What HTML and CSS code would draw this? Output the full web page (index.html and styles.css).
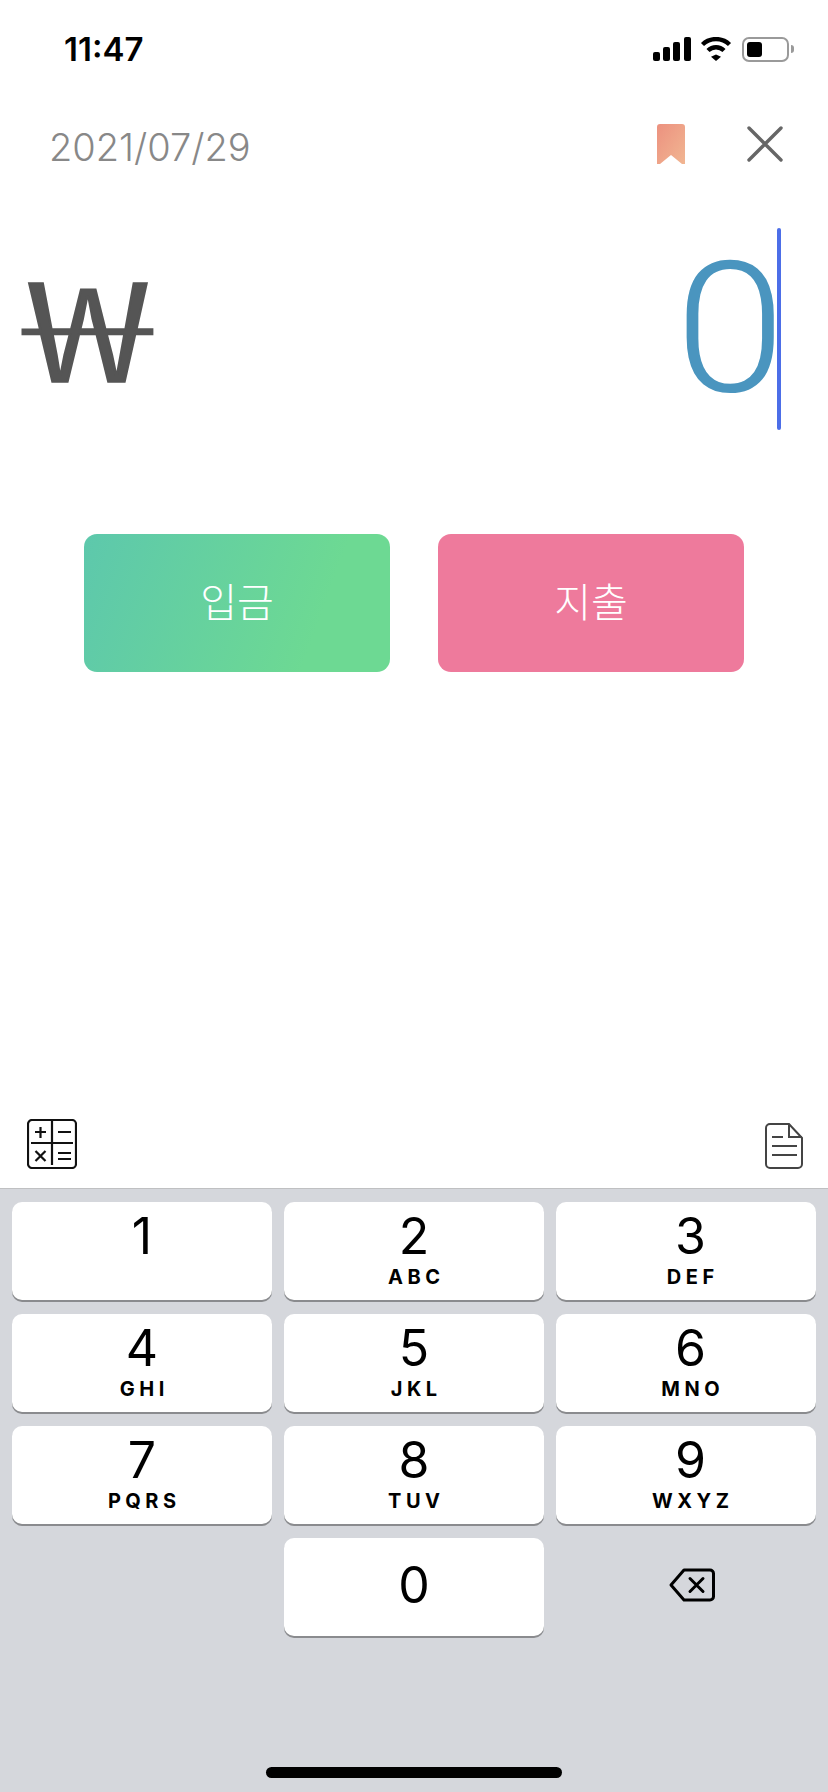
FILE: index.html
```html
<!DOCTYPE html>
<html lang="ko">

<head>
    <meta charset="UTF-8">
    <meta name="viewport" content="width=device-width, initial-scale=1.0">
    <title>입금 / 지출</title>
    <link rel="stylesheet" href="styles.css">
</head>

<body>
    <div class="screen">
        <div class="status">
            <span class="time">11:47</span>
            <div class="status-icons">
                <svg width="38" height="24" viewBox="0 0 38 24">
                    <rect x="0" y="15" width="7" height="9" rx="2"></rect>
                    <rect x="10" y="10" width="7" height="14" rx="2"></rect>
                    <rect x="20" y="5" width="7" height="19" rx="2"></rect>
                    <rect x="31" y="0" width="7" height="24" rx="2"></rect>
                </svg>
                <svg class="wifi" width="32" height="24" viewBox="0 0 32 24">
                    <path d="M16 17.500l5 2.200-5 4.300-5-4.300z"></path>
                    <path d="M8 13.500a11.500 11.500 0 0 1 16 0" class="arc"></path>
                    <path d="M2.500 7.500a19.500 19.500 0 0 1 27 0" class="arc"></path>
                </svg>
                <div class="battery">
                    <div class="battery-body"><span class="battery-fill"></span></div>
                    <span class="battery-nub"></span>
                </div>
            </div>
        </div>

        <div class="top">
            <span class="date">2021/07/29</span>
            <div class="top-icons">
                <svg width="28" height="40" viewBox="0 0 28 40">
                    <defs>
                        <linearGradient id="mark" x1="0" y1="0" x2="1" y2="1">
                            <stop offset="0" stop-color="#ec917f"></stop>
                            <stop offset="1" stop-color="#f1b692"></stop>
                        </linearGradient>
                    </defs>
                    <path d="M3 0h22a3 3 0 0 1 3 3v37l-3 0-11-9-11 9-3 0V3a3 3 0 0 1 3-3z" fill="url(#mark)"></path>
                </svg>
                <svg width="36" height="36" viewBox="0 0 36 36">
                    <path d="M2 2l32 32M34 2L2 34" stroke="#666" stroke-width="3.400" stroke-linecap="round" fill="none"></path>
                </svg>
            </div>
        </div>

        <div class="amount">
            <span class="won">₩</span>
            <div class="value">
                <span class="zero">0</span>
                <span class="caret"></span>
            </div>
        </div>

        <div class="actions">
            <button class="btn btn-in">입금</button>
            <button class="btn btn-out">지출</button>
        </div>

        <div class="tools">
            <svg width="50" height="50" viewBox="0 0 50 50" fill="none" stroke="#111" stroke-width="2.200">
                <rect x="1" y="1" width="48" height="48" rx="4"></rect>
                <path d="M25 0v46M4 24h42"></path>
                <path d="M8 13h11M13.500 8v11M31 13h13M8.500 32l10 10M18.500 32l-10 10M31 34h13M31 40h13"></path>
            </svg>
            <svg width="38" height="46" viewBox="0 0 38 46" fill="none" stroke="#444" stroke-width="2">
                <path d="M23 1H5a4 4 0 0 0-4 4v36a4 4 0 0 0 4 4h28a4 4 0 0 0 4-4V15L24 1v13h13"></path>
                <path d="M7 14h11M7 23h25M7 32h25"></path>
            </svg>
        </div>

        <div class="keyboard">
            <div class="keys">
                <button class="key"><span class="digit">1</span></button>
                <button class="key"><span class="digit">2</span><span class="letters">ABC</span></button>
                <button class="key key-right"><span class="digit">3</span><span class="letters">DEF</span></button>
                <button class="key"><span class="digit">4</span><span class="letters">GHI</span></button>
                <button class="key"><span class="digit">5</span><span class="letters">JKL</span></button>
                <button class="key key-right"><span class="digit">6</span><span class="letters">MNO</span></button>
                <button class="key"><span class="digit">7</span><span class="letters">PQRS</span></button>
                <button class="key"><span class="digit">8</span><span class="letters">TUV</span></button>
                <button class="key key-right"><span class="digit">9</span><span class="letters">WXYZ</span></button>
                <div></div>
                <button class="key key-zero"><span class="digit">0</span></button>
                <div class="backspace">
                    <svg width="46" height="34" viewBox="0 0 46 34" fill="none" stroke="#000" stroke-width="3" stroke-linejoin="round" stroke-linecap="round">
                        <path d="M15 2h26a3.500 3.500 0 0 1 3.500 3.500v23a3.500 3.500 0 0 1-3.500 3.500H15L2 17z"></path>
                        <path d="M21 10.500l13 13M34 10.500l-13 13"></path>
                    </svg>
                </div>
            </div>
            <div class="home-bar"></div>
        </div>
    </div>
</body>

</html>
```

FILE: styles.css
```css
* {
    box-sizing: border-box;
    padding: 0;
    margin: 0;
}

body {
    background-color: white;
    font-family: "Inter", "Noto Sans CJK KR", sans-serif;
}

button {
    font-family: inherit;
}

.screen {
    display: flex;
    flex-direction: column;
    height: 1792px;
    overflow: hidden;
}

.status {
    display: flex;
    justify-content: space-between;
    align-items: center;
    height: 98px;
    padding: 0 34px 0 64px;
}

.time {
    font-size: 33px;
    font-weight: 600;
    color: black;
}

.status-icons {
    display: flex;
    align-items: center;
    gap: 9px;
}

.wifi .arc {
    fill: none;
    stroke: black;
    stroke-width: 4.400px;
}

.battery {
    display: flex;
    align-items: center;
    gap: 2px;
    margin-left: 1px;
}

.battery-body {
    width: 47px;
    height: 25px;
    padding: 3px;
    border: 2px solid #9a9a9a;
    border-radius: 7px;
}

.battery-fill {
    display: block;
    width: 15px;
    height: 100%;
    background-color: black;
    border-radius: 3px;
}

.battery-nub {
    width: 3px;
    height: 8px;
    background-color: #9a9a9a;
    border-radius: 0 3px 3px 0;
}

.top {
    display: flex;
    justify-content: space-between;
    align-items: center;
    height: 98px;
    padding: 0 45px 0 49px;
}

.date {
    font-size: 38px;
    font-weight: 300;
    color: #888;
}

.top-icons {
    display: flex;
    align-items: center;
    gap: 62px;
    margin-top: -7px;
}

.amount {
    display: flex;
    justify-content: space-between;
    align-items: center;
    height: 202px;
    margin-top: 32px;
    padding: 0 47px 0 26px;
}

.won {
    margin-bottom: 16px;
    font-family: "Noto Sans CJK KR", sans-serif;
    font-size: 140px;
    font-weight: 300;
    line-height: 1;
    color: #555;
    -webkit-text-stroke: 1.500px #555;
    transform: scaleX(1.65);
    transform-origin: left center;
}

.value {
    display: flex;
    align-items: center;
    height: 100%;
}

.zero {
    font-family: "Roboto", sans-serif;
    font-size: 181px;
    font-weight: 300;
    line-height: 1;
    color: #4a95bf;
    transform: scaleX(1.1);
    transform-origin: right center;
}

.caret {
    width: 4px;
    height: 100%;
    margin-left: -8px;
    background-color: #4c6ee8;
    border-radius: 2px;
}

.actions {
    display: flex;
    justify-content: center;
    gap: 48px;
    margin-top: 104px;
}

.btn {
    width: 306px;
    height: 138px;
    padding-bottom: 6px;
    border: none;
    border-radius: 13px;
    color: white;
    font-family: "Noto Sans CJK KR", sans-serif;
    font-size: 40px;
    font-weight: 300;
}

.btn-in {
    background: linear-gradient(110deg, #5dc8ac, #6dd993 75%);
}

.btn-out {
    background-color: #ee7a9c;
}

.tools {
    display: flex;
    justify-content: space-between;
    align-items: flex-end;
    margin-top: auto;
    padding: 0 25px 19px 27px;
}

.keyboard {
    height: 604px;
    padding: 13px 12px 0;
    background-color: #d5d7dc;
    border-top: 1px solid #bfc0c2;
}

.keys {
    display: grid;
    grid-template-columns: repeat(3, 260px);
    grid-auto-rows: 98px;
    gap: 14px 12px;
}

.key {
    display: flex;
    flex-direction: column;
    align-items: center;
    padding-top: 4px;
    background-color: white;
    border: none;
    border-radius: 10px;
    box-shadow: 0 2px 0 #8a8b8e;
    color: black;
}

.key-right {
    padding-left: 9px;
}

.digit {
    font-size: 50px;
    line-height: 60px;
}

.letters {
    margin-right: -4.500px;
    font-size: 20px;
    font-weight: 700;
    line-height: 22px;
    letter-spacing: 4.500px;
}

.key-zero {
    justify-content: center;
    padding-top: 0;
    padding-bottom: 4px;
}

.backspace {
    display: flex;
    justify-content: center;
    align-items: center;
    padding: 0 0 4px 12px;
}

.home-bar {
    width: 296px;
    height: 11px;
    margin: 131px auto 0;
    background-color: black;
    border-radius: 6px;
}
```
